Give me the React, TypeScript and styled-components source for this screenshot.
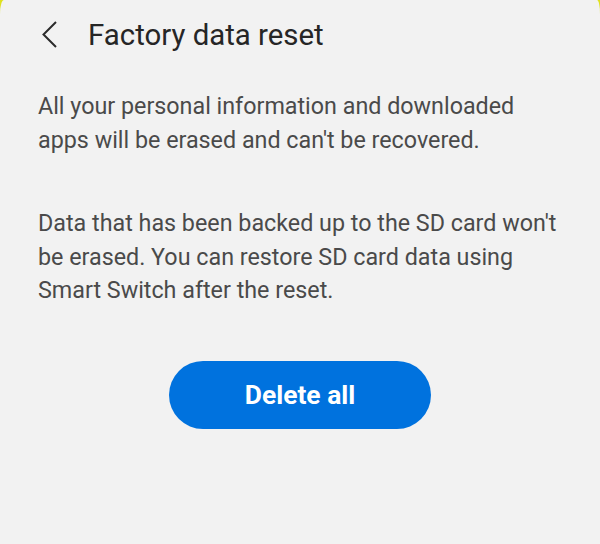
import styled, { createGlobalStyle } from "styled-components";

const Global = createGlobalStyle`
  html, body {
    margin: 0;
    padding: 0;
    background: #f2f2f2;
  }
`;

const Device = styled.div`
  width: 600px;
  height: 544px;
  background: #dfe11f;
`;

const Screen = styled.div`
  width: 600px;
  height: 544px;
  box-sizing: border-box;
  background: #f2f2f2;
  border-top-left-radius: 4px 14px;
  border-top-right-radius: 3px 14px;
  overflow: hidden;

  font-family: Roboto, "Liberation Sans", sans-serif;
`;

const Header = styled.div`
  height: 70px;
  padding-left: 41px;
  box-sizing: border-box;

  display: flex;
  align-items: center;
  gap: 30px;
`;

const BackButton = styled.button`
  width: 17px;
  height: 28px;
  padding: 0;
  border: none;
  background: none;

  display: flex;
  align-items: center;
  justify-content: center;
`;

const Title = styled.h1`
  margin: 0;
  font-size: 29.4px;
  font-weight: 400;
  color: #262626;
`;

const Body = styled.div`
  padding: 20px 38px 0;
`;

const Paragraph = styled.p`
  margin: 0 0 50px;
  font-size: 23.3px;
  line-height: 33.6px;
  color: #4a4a4a;
`;

const Actions = styled.div`
  display: flex;
  justify-content: center;
  padding-top: 3px;
`;

const PrimaryButton = styled.button`
  width: 262px;
  height: 68px;
  border: none;
  border-radius: 34px;
  background: #0072de;

  color: #fff;
  font-family: Roboto, "Liberation Sans", sans-serif;
  font-size: 26.4px;
  font-weight: 700;
`;

function App() {
  return (
    <>
      <Global />
      <Device>
        <Screen>
          <Header>
            <BackButton aria-label="Back">
              <svg width="17" height="28" viewBox="0 0 17 28">
                <polyline
                  points="15,1 2.5,13.5 15,26"
                  fill="none"
                  stroke="#2b2b2b"
                  strokeWidth="2"
                />
              </svg>
            </BackButton>
            <Title>Factory data reset</Title>
          </Header>
          <Body>
            <Paragraph>
              All your personal information and downloaded apps will be erased
              and can't be recovered.
            </Paragraph>
            <Paragraph>
              Data that has been backed up to the SD card won't be erased. You
              can restore SD card data using Smart Switch after the reset.
            </Paragraph>
            <Actions>
              <PrimaryButton>Delete all</PrimaryButton>
            </Actions>
          </Body>
        </Screen>
      </Device>
    </>
  );
}

export default App;
